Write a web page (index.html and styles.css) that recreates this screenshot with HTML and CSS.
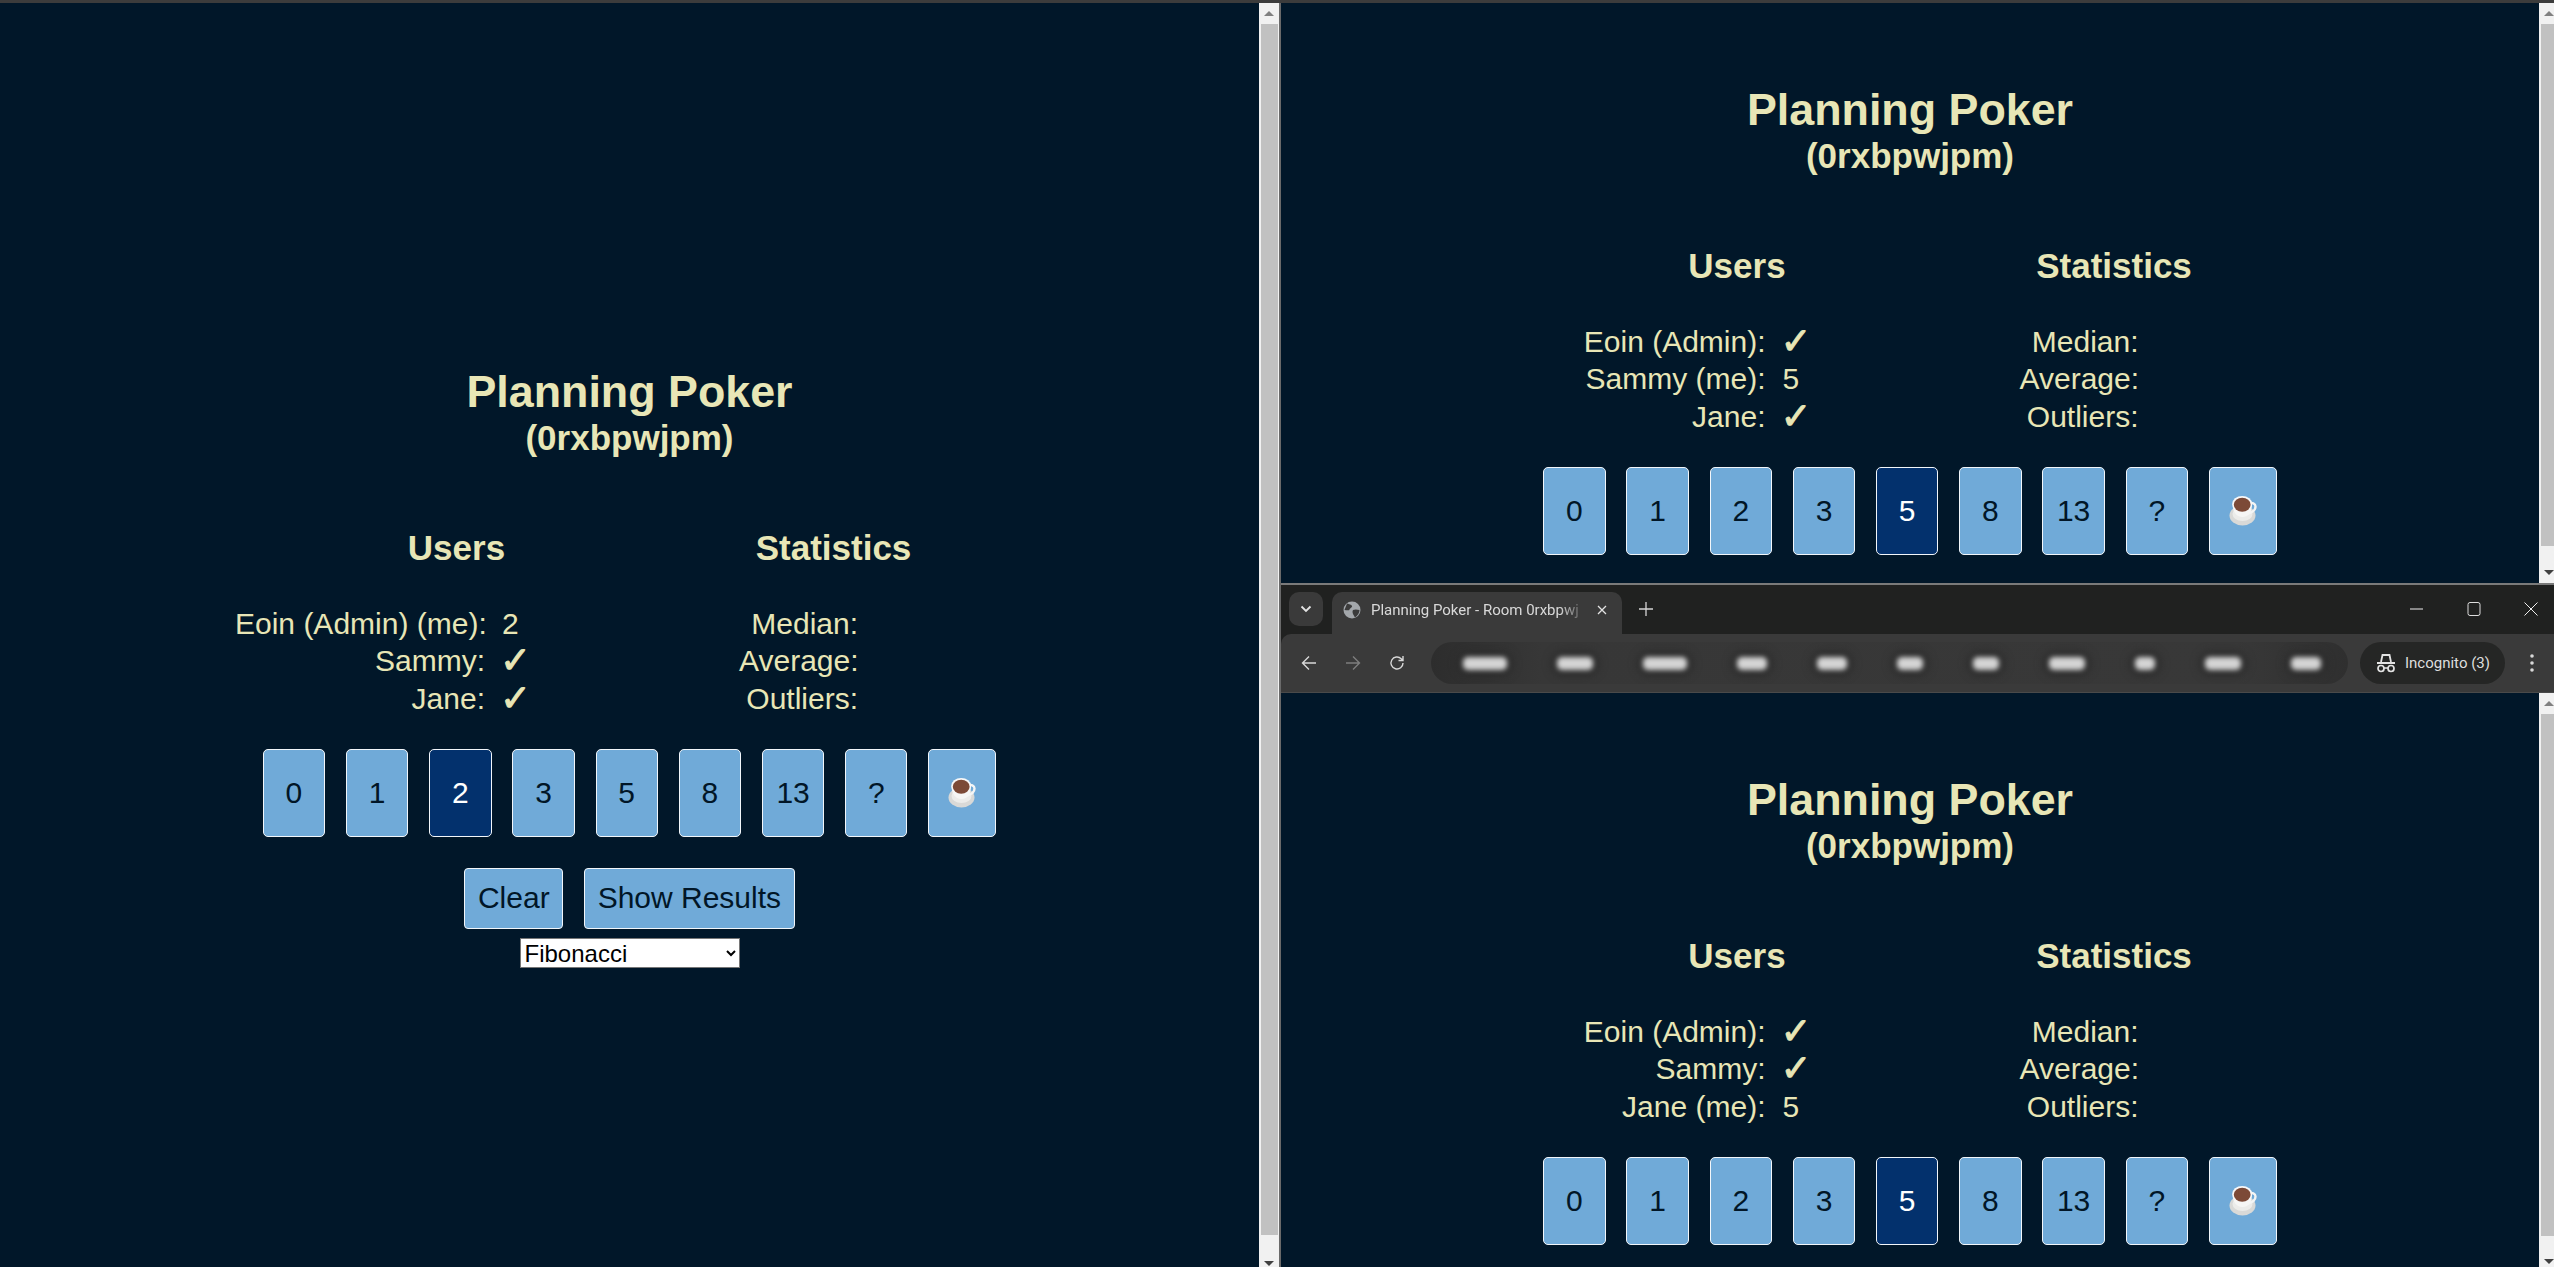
FILE: index.html
```html
<!DOCTYPE html>
<html lang="en">
<head>
<meta charset="utf-8">
<title>Planning Poker</title>
<link rel="stylesheet" href="styles.css">
</head>
<body>
<svg class="defs" width="0" height="0" aria-hidden="true">
  <symbol id="cup" viewBox="0 0 28 30">
    <ellipse cx="13.5" cy="19.5" rx="13" ry="10" fill="#d9d9d7"/>
    <ellipse cx="13.5" cy="18" rx="10" ry="7" fill="#ececea"/>
    <path d="M20 7.500c3-1.500 6.500 0 6.500 3 0 3.500-3.500 6-7.500 7" fill="none" stroke="#f4f5f5" stroke-width="2.400"/>
    <path d="M3.500 8c0 7 3.500 13 10 13s9.500-6 9.500-13z" fill="#f6f6f5"/>
    <ellipse cx="13.200" cy="8" rx="10" ry="8" fill="#f8f8f8"/>
    <ellipse cx="13.200" cy="8.800" rx="8.400" ry="7" fill="#7c4a37"/>
  </symbol>
</svg>
<div class="desktop">
  <section class="window">
    <main class="pane pane-left">
      <div class="room">
        <h1 class="title">Planning Poker</h1>
        <h2 class="room-id">(0rxbpwjpm)</h2>
        <div class="panels">
          <div class="panel panel-users">
            <h3 class="panel-title">Users</h3>
            <dl class="rows rows-users">
              <dt>Eoin (Admin) (me):</dt><dd>2</dd>
              <dt>Sammy:</dt><dd class="check">✓</dd>
              <dt>Jane:</dt><dd class="check">✓</dd>
            </dl>
          </div>
          <div class="panel panel-stats">
            <h3 class="panel-title">Statistics</h3>
            <dl class="rows rows-stats">
              <dt>Median:</dt><dd></dd>
              <dt>Average:</dt><dd></dd>
              <dt>Outliers:</dt><dd></dd>
            </dl>
          </div>
        </div>
        <div class="cards">
          <button class="card">0</button><button class="card">1</button><button class="card card-on">2</button><button class="card">3</button><button class="card">5</button><button class="card">8</button><button class="card">13</button><button class="card">?</button><button class="card card-coffee" aria-label="coffee"><svg class="cup"><use href="#cup"/></svg></button>
        </div>
        <div class="actions">
          <button class="action">Clear</button>
          <button class="action">Show Results</button>
        </div>
        <div class="deck">
          <select class="deck-select"><option>Fibonacci</option><option>T-Shirt</option></select>
        </div>
      </div>
    </main>
    <div class="scrollbar scrollbar-left">
      <span class="arrow arrow-up"></span>
      <span class="thumb thumb-left"></span>
      <span class="arrow arrow-down"></span>
    </div>
  </section>
  <div class="divider"></div>
  <div class="stack">
    <section class="window">
      <main class="pane pane-top">
        <div class="room">
          <h1 class="title">Planning Poker</h1>
          <h2 class="room-id">(0rxbpwjpm)</h2>
          <div class="panels">
            <div class="panel panel-users">
              <h3 class="panel-title">Users</h3>
              <dl class="rows rows-users">
                <dt>Eoin (Admin):</dt><dd class="check">✓</dd>
                <dt>Sammy (me):</dt><dd>5</dd>
                <dt>Jane:</dt><dd class="check">✓</dd>
              </dl>
            </div>
            <div class="panel panel-stats">
              <h3 class="panel-title">Statistics</h3>
              <dl class="rows rows-stats">
                <dt>Median:</dt><dd></dd>
                <dt>Average:</dt><dd></dd>
                <dt>Outliers:</dt><dd></dd>
              </dl>
            </div>
          </div>
          <div class="cards">
            <button class="card">0</button><button class="card">1</button><button class="card">2</button><button class="card">3</button><button class="card card-on">5</button><button class="card">8</button><button class="card">13</button><button class="card">?</button><button class="card card-coffee" aria-label="coffee"><svg class="cup"><use href="#cup"/></svg></button>
          </div>
        </div>
      </main>
      <div class="scrollbar scrollbar-right">
        <span class="arrow arrow-up"></span>
        <span class="thumb thumb-top"></span>
        <span class="arrow arrow-down"></span>
      </div>
    </section>

    <header class="chrome">
      <div class="tabstrip">
        <span class="tab-search"><svg width="12" height="8" viewBox="0 0 12 8"><path d="M1.500 1.500 6 6l4.500-4.500" fill="none" stroke="#e3e3e3" stroke-width="1.800"/></svg></span>
        <div class="tab">
          <svg class="globe" width="18" height="18" viewBox="0 0 18 18"><circle cx="9" cy="9" r="8.500" fill="#a3a7ab"/><path d="M4 2.500c2 1 4.500 1 5 2.500s-2 2-2.500 3.500-3 .5-5 .5zM10 9c2-1 4.500-.5 6.500 0 0 3-2 6-4.500 7.500-1-2-3.500-5-2-7.500z" fill="#3b3b3b"/></svg>
          <span class="tab-title">Planning Poker - Room 0rxbpwj</span>
          <svg class="tab-close" width="10" height="10" viewBox="0 0 10 10"><path d="M1 1l8 8M9 1l-8 8" stroke="#e3e3e3" stroke-width="1.300"/></svg>
        </div>
        <svg class="new-tab" width="14" height="14" viewBox="0 0 14 14"><path d="M7 0v14M0 7h14" stroke="#d4d4d4" stroke-width="1.300"/></svg>
        <div class="window-controls">
          <svg width="14" height="14" viewBox="0 0 14 14"><path d="M0 7h13" stroke="#eee" stroke-width="1"/></svg>
          <svg width="14" height="14" viewBox="0 0 14 14"><rect x="1" y=".5" width="12" height="13" rx="2" fill="none" stroke="#ddd"/></svg>
          <svg width="14" height="14" viewBox="0 0 14 14"><path d="M.5.500l13 13M13.500.5l-13 13" stroke="#eee"/></svg>
        </div>
      </div>
      <div class="toolbar">
        <svg class="tool" width="16" height="16" viewBox="0 0 16 16"><path d="M15 8H2M8 1.500 1.500 8 8 14.500" fill="none" stroke="#d8d8d8" stroke-width="1.400"/></svg>
        <svg class="tool" width="16" height="16" viewBox="0 0 16 16"><path d="M1 8h13M8 1.500 14.500 8 8 14.500" fill="none" stroke="#7e7e7e" stroke-width="1.400"/></svg>
        <svg class="tool" width="16" height="16" viewBox="0 0 16 16"><path d="M14 8a6 6 0 1 1-1.800-4.300L14 5.500M14 1v4.500H9.500" fill="none" stroke="#d8d8d8" stroke-width="1.400"/></svg>
        <div class="urlbar">
          <span class="blob blob-a"></span><span class="blob blob-b"></span><span class="blob blob-a"></span><span class="blob blob-c"></span><span class="blob blob-c"></span><span class="blob blob-d"></span><span class="blob blob-d"></span><span class="blob blob-b"></span><span class="blob blob-e"></span><span class="blob blob-b"></span><span class="blob blob-c"></span>
        </div>
        <div class="incognito">
          <svg width="20" height="20" viewBox="0 0 20 20"><path d="M5 9l1.500-7h7L15 9M1 10h18" fill="none" stroke="#e3e3e3" stroke-width="1.800"/><circle cx="5" cy="15.500" r="3" fill="none" stroke="#e3e3e3" stroke-width="1.700"/><circle cx="15" cy="15.500" r="3" fill="none" stroke="#e3e3e3" stroke-width="1.700"/><path d="M8 15h4" stroke="#e3e3e3" stroke-width="1.500"/></svg>
          <span class="incognito-label">Incognito (3)</span>
        </div>
        <svg class="menu" width="6" height="20" viewBox="0 0 6 20"><circle cx="3" cy="3" r="1.800" fill="#d8d8d8"/><circle cx="3" cy="10" r="1.800" fill="#d8d8d8"/><circle cx="3" cy="17" r="1.800" fill="#d8d8d8"/></svg>
      </div>
    </header>

    <section class="window">
      <main class="pane pane-bottom">
        <div class="room">
          <h1 class="title">Planning Poker</h1>
          <h2 class="room-id">(0rxbpwjpm)</h2>
          <div class="panels">
            <div class="panel panel-users">
              <h3 class="panel-title">Users</h3>
              <dl class="rows rows-users">
                <dt>Eoin (Admin):</dt><dd class="check">✓</dd>
                <dt>Sammy:</dt><dd class="check">✓</dd>
                <dt>Jane (me):</dt><dd>5</dd>
              </dl>
            </div>
            <div class="panel panel-stats">
              <h3 class="panel-title">Statistics</h3>
              <dl class="rows rows-stats">
                <dt>Median:</dt><dd></dd>
                <dt>Average:</dt><dd></dd>
                <dt>Outliers:</dt><dd></dd>
              </dl>
            </div>
          </div>
          <div class="cards">
            <button class="card">0</button><button class="card">1</button><button class="card">2</button><button class="card">3</button><button class="card card-on">5</button><button class="card">8</button><button class="card">13</button><button class="card">?</button><button class="card card-coffee" aria-label="coffee"><svg class="cup"><use href="#cup"/></svg></button>
          </div>
        </div>
      </main>
      <div class="scrollbar scrollbar-right">
        <span class="arrow arrow-up"></span>
        <span class="thumb thumb-bottom"></span>
        <span class="arrow arrow-down"></span>
      </div>
    </section>
  </div>
</div>
</body>
</html>
```

FILE: styles.css
```css
* { box-sizing: border-box; }
html, body { margin: 0; height: 100%; overflow: hidden; }
body { background: #011729; font-family: "Liberation Sans", Arial, sans-serif; }
.defs { position: absolute; }

.desktop {
  display: grid;
  grid-template-columns: 1279px 2px 1fr;
  height: 1267px;
  border-top: 3px solid #3c3c3c;
}
.divider { background: #6a6a6a; }
.stack {
  display: grid;
  grid-template-rows: 580px 110px 574px;
  min-width: 0;
  min-height: 0;
}
.window { display: flex; min-width: 0; min-height: 0; overflow: hidden; }
.pane { flex: 1; min-width: 0; overflow: hidden; background: #011729; }
.pane-left { padding-top: 363px; }
.pane-top { padding-top: 81px; }
.pane-bottom { padding-top: 81px; }

.room { color: #e8e6b6; text-align: center; }
.title { margin: 0; font-size: 44.8px; line-height: 51px; font-weight: 700; }
.room-id { margin: 1px 0 0; font-size: 35px; line-height: 40px; font-weight: 700; }
.panels { display: flex; justify-content: center; margin-top: 70px; padding-right: 96px; gap: 61px; }
.panel-users { width: 443px; }
.panel-stats { width: 189px; }
.panel-title { margin: 0; font-size: 35px; line-height: 40px; font-weight: 700; }
.rows {
  display: grid;
  margin: 36.5px 0 0;
  font-size: 30px;
  line-height: 37.5px;
  column-gap: 17px;
  text-align: left;
}
.rows-users { grid-template-columns: 250px 1fr; }
.rows-stats { grid-template-columns: 119px 1fr; }
.rows dt { text-align: right; white-space: nowrap; }
.rows dd { margin: 0; }
.rows .check {
  font-family: "DejaVu Sans", sans-serif;
  font-size: 37px;
  line-height: 37.5px;
  height: 37.5px;
  margin-left: -2px;
  -webkit-text-stroke: 1px #e8e6b6;
}

.cards { display: flex; justify-content: center; gap: 20.8px; margin-top: 31.5px; }
.card {
  width: 62.4px;
  height: 88px;
  padding: 0;
  background: #70aad8;
  color: #011627;
  border: 1px solid #f2f6fa;
  border-radius: 5px;
  font: 30px "Liberation Sans", Arial, sans-serif;
}
.card-on { background: #03316d; color: #fff; }
.card-coffee { width: 68px; display: flex; align-items: center; justify-content: center; }
.cup { width: 28px; height: 30px; display: block; }

.actions { display: flex; justify-content: center; gap: 21px; margin-top: 31px; }
.action {
  height: 61px;
  padding: 0 12.500px;
  background: #70aad8;
  color: #011627;
  border: 1px solid #f2f6fa;
  border-radius: 4px;
  font: 30px "Liberation Sans", Arial, sans-serif;
}
.deck { display: flex; justify-content: center; margin-top: 9px; }
.deck-select {
  width: 220px;
  height: 30px;
  background: #fff;
  color: #000;
  font: 24px "Liberation Sans", Arial, sans-serif;
  border: 1px solid #767676;
  padding: 0;
}

.scrollbar {
  display: flex;
  flex-direction: column;
  flex: none;
  background: #f1f1f1;
  overflow: hidden;
}
.scrollbar-left { width: 20px; }
.scrollbar-right { width: 15px; }
.arrow { flex: none; width: 20px; height: 21px; display: flex; align-items: center; justify-content: center; }
.arrow::before { content: ""; width: 0; height: 0; border-left: 5px solid transparent; border-right: 5px solid transparent; }
.arrow-up::before { border-bottom: 5px solid #808080; }
.arrow-down::before { border-top: 5px solid #404040; }
.thumb { flex: none; width: 17px; margin-left: 2px; background: #c1c1c1; }
.thumb-left { height: 1211px; margin-bottom: 18px; }
.thumb-top { height: 522px; margin-bottom: 16px; }
.thumb-bottom { height: 522px; margin-bottom: 15px; }

.chrome { display: flex; flex-direction: column; background: #202120; border-top: 2px solid #7a7a7a; height: 110px; }
.tabstrip { display: flex; align-items: flex-start; height: 49px; padding: 7px 0 0 8px; flex: none; }
.tab-search {
  width: 34px; height: 34px;
  display: flex; align-items: center; justify-content: center;
  background: #3a3a3a; border-radius: 10px;
}
.tab {
  display: flex; align-items: center;
  width: 290px; height: 42px;
  margin-left: 9px;
  padding: 0 15px 6px 11px;
  background: #3a3a3a;
  border-radius: 10px 10px 0 0;
}
.globe { flex: none; }
.tab-title {
  flex: 1; min-width: 0;
  margin-left: 10px;
  white-space: nowrap;
  color: #d9d9d9;
  font: 15px Roboto, "Liberation Sans", sans-serif;
  line-height: 20px;
  -webkit-mask-image: linear-gradient(90deg, #000 90%, rgba(0,0,0,.25));
  mask-image: linear-gradient(90deg, #000 90%, rgba(0,0,0,.25));
}
.tab-close { flex: none; margin-left: 17px; }
.new-tab { margin: 10px 0 0 17px; flex: none; }
.window-controls { display: flex; gap: 43px; margin: 10px 16px 0 auto; align-items: center; }
.toolbar {
  display: flex; align-items: center;
  flex: 1;
  padding: 0 0 0 20px;
  background: #3a3a3a;
  border-radius: 10px 0 0 0;
  border-bottom: 1px solid #4a4a4a;
}
.tool { flex: none; margin-right: 28px; }
.tool:nth-of-type(3) { margin-right: 26px; }
.urlbar {
  flex: none;
  display: flex; align-items: center;
  gap: 50px;
  width: 917px; height: 42px;
  padding-left: 32px;
  background: linear-gradient(90deg, #2d2d2d, #373737 12%, #383838 88%, #2f2f2f);
  border-radius: 21px;
  overflow: hidden;
}
.blob { flex: none; height: 13px; background: #d4d4d4; border-radius: 5px; filter: blur(2.500px); box-shadow: 0 0 7px 5px #2b2b2b; }
.blob-a { width: 44px; }
.blob-b { width: 36px; }
.blob-c { width: 30px; }
.blob-d { width: 26px; }
.blob-e { width: 20px; }
.incognito {
  flex: none;
  display: flex; align-items: center;
  width: 145px; height: 42px;
  margin-left: 12px;
  padding-left: 16px;
  background: #252625;
  border-radius: 21px;
}
.incognito-label { margin-left: 9px; color: #dedede; font: 15px Roboto, "Liberation Sans", sans-serif; white-space: nowrap; }
.menu { flex: none; margin-left: 24px; }
```
